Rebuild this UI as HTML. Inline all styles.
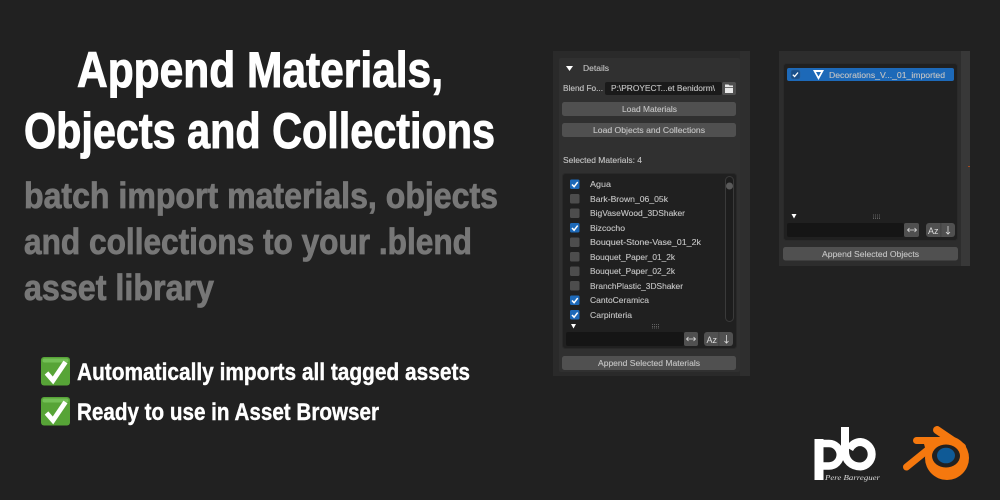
<!DOCTYPE html>
<html><head><meta charset="utf-8"><style>
html,body{margin:0;padding:0;background:#212121;width:1000px;height:500px;overflow:hidden}
svg{display:block}
.t{font-family:"Liberation Sans",sans-serif;font-weight:700;fill:#fff;stroke:#fff}
.s{font-family:"Liberation Sans",sans-serif;font-weight:700;fill:#777;stroke:#777;stroke-width:.8px}
.u{font-family:"Liberation Sans",sans-serif;font-size:8px;fill:#c4c4c4;stroke:#c4c4c4;stroke-width:.12px}
</style></head><body>
<svg width="1000" height="500" viewBox="0 0 1000 500" xmlns="http://www.w3.org/2000/svg">
<defs>
<g id="ck"><rect width="9.500" height="9.500" rx="1.500" fill="#1d69b8"/><path d="M2 5L4.100 7.200L7.700 2.600" fill="none" stroke="#fff" stroke-width="1.500"/></g>
<g id="un"><rect width="9.500" height="9.500" rx="1.500" fill="#4d4d4d"/></g>
<g id="em"><rect width="29" height="28.500" rx="3" fill="#57a437"/><rect x="1.500" y="1.500" width="26" height="4" rx="2" fill="#74c057"/><path d="M5.500 16L12 23.500L24.500 5" fill="none" stroke="#fff" stroke-width="4.800"/></g>
</defs>
<rect width="1000" height="500" fill="#212121"/>

<text class="t" style="stroke-width:1px" x="77" y="87" font-size="50" textLength="366" lengthAdjust="spacingAndGlyphs">Append Materials,</text>
<text class="t" style="stroke-width:1px" x="24" y="148" font-size="50" textLength="471" lengthAdjust="spacingAndGlyphs">Objects and Collections</text>
<text class="s" x="24" y="208" font-size="36" textLength="474" lengthAdjust="spacingAndGlyphs">batch import materials, objects</text>
<text class="s" x="24" y="254" font-size="36" textLength="448" lengthAdjust="spacingAndGlyphs">and collections to your .blend</text>
<text class="s" x="24" y="300" font-size="36" textLength="190" lengthAdjust="spacingAndGlyphs">asset library</text>

<use href="#em" x="41" y="357"/>
<text class="t" style="stroke-width:.4px" x="77" y="380" font-size="24" textLength="393" lengthAdjust="spacingAndGlyphs">Automatically imports all tagged assets</text>
<use href="#em" x="41" y="397"/>
<text class="t" style="stroke-width:.4px" x="77" y="420" font-size="24" textLength="302" lengthAdjust="spacingAndGlyphs">Ready to use in Asset Browser</text>

<!-- left panel -->
<rect x="553" y="51" width="197" height="325" fill="#2a2a2a"/>
<rect x="740" y="51" width="10" height="325" fill="#2e2e2e"/>
<rect x="559" y="58" width="181" height="314" rx="2" fill="#303030"/>
<path d="M566 66h7l-3.500 5z" fill="#fff"/>
<text class="u" x="583" y="71" textLength="26" lengthAdjust="spacingAndGlyphs">Details</text>
<text class="u" x="563" y="91" textLength="40" lengthAdjust="spacingAndGlyphs">Blend Fo...</text>
<rect x="605" y="82" width="117" height="13" rx="2" fill="#1a1a1a"/>
<text class="u" x="611" y="91" textLength="104" lengthAdjust="spacingAndGlyphs">P:\PROYECT...et Benidorm\</text>
<rect x="722" y="82" width="14" height="13" rx="2" fill="#505050"/>
<path d="M725 84.500h3.500l1 1h3.500v7.500h-8z" fill="#e8e8e8"/><rect x="725" y="87" width="8" height=".8" fill="#505050"/>
<rect x="562" y="102" width="174" height="14" rx="2.500" fill="#505050"/>
<text class="u" x="622" y="112" textLength="55" lengthAdjust="spacingAndGlyphs">Load Materials</text>
<rect x="562" y="123" width="174" height="14" rx="2.500" fill="#505050"/>
<text class="u" x="593" y="133" textLength="112" lengthAdjust="spacingAndGlyphs">Load Objects and Collections</text>
<text class="u" x="563" y="163" textLength="79" lengthAdjust="spacingAndGlyphs">Selected Materials: 4</text>
<rect x="562.500" y="173.500" width="174" height="175" rx="3" fill="#202020" stroke="#292929"/>

<use href="#ck" x="570" y="179.500"/><text class="u" x="590" y="187" textLength="21" lengthAdjust="spacingAndGlyphs">Agua</text>
<use href="#un" x="570" y="194"/><text class="u" x="590" y="202" textLength="78" lengthAdjust="spacingAndGlyphs">Bark-Brown_06_05k</text>
<use href="#un" x="570" y="208.500"/><text class="u" x="590" y="216" textLength="95" lengthAdjust="spacingAndGlyphs">BigVaseWood_3DShaker</text>
<use href="#ck" x="570" y="223"/><text class="u" x="590" y="231" textLength="35" lengthAdjust="spacingAndGlyphs">Bizcocho</text>
<use href="#un" x="570" y="237.500"/><text class="u" x="590" y="245" textLength="111" lengthAdjust="spacingAndGlyphs">Bouquet-Stone-Vase_01_2k</text>
<use href="#un" x="570" y="252"/><text class="u" x="590" y="260" textLength="85" lengthAdjust="spacingAndGlyphs">Bouquet_Paper_01_2k</text>
<use href="#un" x="570" y="266.500"/><text class="u" x="590" y="274" textLength="85" lengthAdjust="spacingAndGlyphs">Bouquet_Paper_02_2k</text>
<use href="#un" x="570" y="281"/><text class="u" x="590" y="289" textLength="93" lengthAdjust="spacingAndGlyphs">BranchPlastic_3DShaker</text>
<use href="#ck" x="570" y="295.500"/><text class="u" x="590" y="303" textLength="59" lengthAdjust="spacingAndGlyphs">CantoCeramica</text>
<use href="#ck" x="570" y="310"/><text class="u" x="590" y="318" textLength="42" lengthAdjust="spacingAndGlyphs">Carpinteria</text>

<rect x="725.500" y="176.500" width="8" height="145" rx="4" fill="#1d1d1d" stroke="#3a3a3a"/>
<circle cx="729.500" cy="186" r="3.500" fill="#5a5a5a"/>
<path d="M571 324h5l-2.500 4.500z" fill="#fff"/>
<path d="M652 324.500h8M652 326.500h8M652 328h8" stroke="#777" stroke-width=".8" stroke-dasharray="1 1"/>
<rect x="566" y="332" width="118" height="14" rx="2" fill="#151515"/>
<rect x="684" y="332" width="14" height="14" rx="2" fill="#505050"/>
<path d="M687 339h8M688.500 337l-2 2 2 2M693.500 337l2 2-2 2" stroke="#ddd" fill="none" stroke-width=".8"/>
<rect x="704" y="332" width="29" height="14" rx="3" fill="#505050"/>
<rect x="718.500" y="332" width=".8" height="14" fill="#3c3c3c"/>
<text x="706.500" y="343" font-family="Liberation Sans,sans-serif" font-size="9" fill="#ddd">Az</text>
<path d="M726.500 335v8M724.500 341l2 2.200 2-2.200" stroke="#ddd" fill="none" stroke-width=".8"/>
<rect x="562" y="356" width="174" height="14" rx="2.500" fill="#505050"/>
<text class="u" x="598" y="366" textLength="102" lengthAdjust="spacingAndGlyphs">Append Selected Materials</text>

<!-- right panel -->
<rect x="779" y="51" width="191" height="215" fill="#2d2d2d"/>
<rect x="961" y="51" width="9" height="215" fill="#383838"/>
<rect x="783.500" y="63.500" width="174" height="177" rx="3" fill="#202020" stroke="#2a2a2a"/>
<rect x="787" y="68" width="167" height="13" rx="2" fill="#1d69b8"/>
<rect x="791" y="70" width="9" height="9" rx="2" fill="#1a4f8a" stroke="#2f5f92" stroke-width=".5"/>
<path d="M792.800 74.700L794.600 76.500L798 72.500" fill="none" stroke="#fff" stroke-width="1.300"/>
<path d="M813 70h11l-5.500 10z" fill="#fff"/><path d="M816 72h5l-2.500 4.500z" fill="#1d69b8"/>
<text class="u" x="829" y="78" textLength="116" lengthAdjust="spacingAndGlyphs">Decorations_V..._01_imported</text>
<path d="M791.500 214h5l-2.500 4.500z" fill="#fff"/>
<path d="M873 215h8M873 217h8M873 218.500h8" stroke="#777" stroke-width=".8" stroke-dasharray="1 1"/>
<rect x="787" y="223" width="117" height="14" rx="2" fill="#151515"/>
<rect x="904" y="223" width="15" height="14" rx="2" fill="#505050"/>
<path d="M908 230h8M909.500 228l-2 2 2 2M914.500 228l2 2-2 2" stroke="#ddd" fill="none" stroke-width=".8"/>
<rect x="926" y="223" width="29" height="14" rx="3" fill="#505050"/>
<rect x="940.500" y="223" width=".8" height="14" fill="#3c3c3c"/>
<text x="928" y="234" font-family="Liberation Sans,sans-serif" font-size="9" fill="#ddd">Az</text>
<path d="M948 226v8M946 232l2 2.200 2-2.200" stroke="#ddd" fill="none" stroke-width=".8"/>
<rect x="783" y="247" width="175" height="13.500" rx="2.500" fill="#505050"/>
<text class="u" x="822" y="257" textLength="97" lengthAdjust="spacingAndGlyphs">Append Selected Objects</text>
<rect x="968" y="166" width="2" height="1" fill="#a04a20"/>

<!-- pb logo -->
<rect x="814.500" y="439" width="9" height="41" fill="#fff"/>
<path d="M818 443.500H829A11 11 0 0 1 829 466H823" fill="none" stroke="#fff" stroke-width="7.500"/>
<path d="M845 427V451C845 461 852 466.500 860.500 466.500A12.300 12.300 0 0 0 860.500 442C856 442 852 444.500 849.500 449" fill="none" stroke="#fff" stroke-width="8"/>
<text x="825" y="480" font-family="Liberation Serif,serif" font-style="italic" font-size="7" fill="#ddd" textLength="55" lengthAdjust="spacingAndGlyphs">Pere Barreguer</text>

<!-- blender logo -->
<path d="M906.500 467L930 448" stroke="#f5780e" stroke-width="7" stroke-linecap="round"/>
<path d="M916.500 440.500H950" stroke="#f5780e" stroke-width="7" stroke-linecap="round"/>
<path d="M937 430L962 447" stroke="#f5780e" stroke-width="8" stroke-linecap="round"/>
<circle cx="947" cy="458" r="22" fill="#f5780e"/>
<path d="M924 444L945 437V460L928 458Z" fill="#f5780e"/>
<ellipse cx="946" cy="456" rx="14" ry="11.500" fill="#212121"/>
<ellipse cx="946" cy="455.500" rx="9" ry="7.800" fill="#0f5a96"/>
</svg>
</body></html>
